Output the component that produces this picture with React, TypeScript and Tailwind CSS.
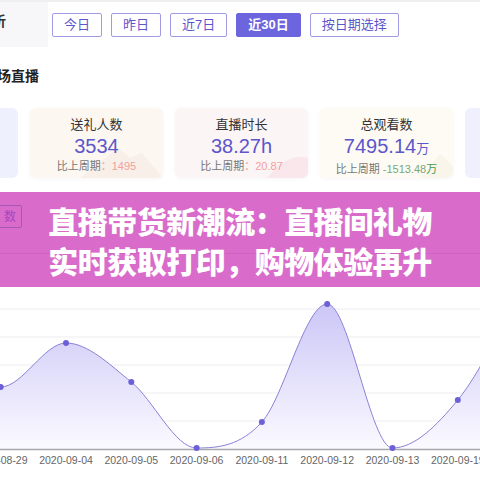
import React from 'react';

const font = { fontFamily: '"Liberation Sans", "Noto Sans CJK SC", sans-serif' };

const ranges = ['今日', '昨日', '近7日', '近30日', '按日期选择'];

const cards = [
  { title: '送礼人数', value: '3534', unit: '', diff: '1495', tone: 'up', bg: 'bg-[#fcf7f1]' },
  { title: '直播时长', value: '38.27h', unit: '', diff: '20.87', tone: 'up', bg: 'bg-[#fcf5f5]' },
  { title: '总观看数', value: '7495.14', unit: '万', diff: '-1513.48', tone: 'down', bg: 'bg-[#fdfbf4]' },
];

// chart points (x in px, y inside the svg)
const labels = ['2020-08-29', '2020-09-04', '2020-09-05', '2020-09-06', '2020-09-11', '2020-09-12', '2020-09-13', '2020-09-19'];
const values = [85, 100, 56, 95, 161, 135, 17, 161, 113, 2];
const step = 65.3;
const pts = values.map((y, i) => ({ x: 0.7 + step * (i - 1), y }));
const baseY = 162;

function monotonePath(p: { x: number; y: number }[]) {
  const n = p.length;
  const m: number[] = [];
  for (let i = 0; i < n - 1; i++) m.push((p[i + 1].y - p[i].y) / (p[i + 1].x - p[i].x));
  const t: number[] = [];
  for (let i = 0; i < n; i++) {
    if (i === 0) t.push(m[0]);
    else if (i === n - 1) t.push(m[n - 2]);
    else if (m[i - 1] * m[i] <= 0) t.push(0);
    else {
      const avg = (m[i - 1] + m[i]) / 2;
      const lim = 3 * Math.min(Math.abs(m[i - 1]), Math.abs(m[i]));
      t.push(Math.sign(avg) * Math.min(Math.abs(avg), lim));
    }
  }
  let d = `M${p[0].x},${p[0].y}`;
  for (let i = 0; i < n - 1; i++) {
    const h = p[i + 1].x - p[i].x;
    d += ` C${p[i].x + h / 3},${p[i].y + (t[i] * h) / 3} ${p[i + 1].x - h / 3},${p[i + 1].y - (t[i + 1] * h) / 3} ${p[i + 1].x},${p[i + 1].y}`;
  }
  return d;
}

function StatCard({ card }: { card: (typeof cards)[number] }) {
  return (
    <div className={`relative w-[133px] h-[70px] shrink-0 rounded-md overflow-hidden ${card.bg} shadow-[0_1px_4px_rgba(0,0,0,0.04)]`}>
      {/* faint decoration */}
      <svg className="absolute left-0 bottom-0" width="133" height="40" viewBox="0 0 133 40">
        {card.title === '送礼人数' && <path d="M50 40 L88 10 L100 20 L112 15 L133 40 Z" fill="#f8efe8" />}
        {card.title === '直播时长' && <path d="M92 40 Q112 14 133 20 L133 40 Z" fill="#f9e7ec" />}
        {card.title === '总观看数' && <path d="M100 40 L120 16 L133 28 L133 40 Z" fill="#f9f5ea" />}
      </svg>
      <div className="relative flex flex-col items-center pt-[8px]">
        <div className="text-[13px] leading-[18px] text-[#333]">{card.title}</div>
        <div className="text-[20px] leading-[24px] text-[#5d56cb]">
          {card.value}
          {card.unit && <span className="text-[13px]">{card.unit}</span>}
        </div>
        <div className="text-[11px] leading-[16px] text-[#777]">
          比上周期
          {card.tone === 'up' ? (
            <span className="text-[#f2a0a0]">：{card.diff}</span>
          ) : (
            <span className="text-[#7aa87a]">
              {' '}
              {card.diff}
              <span className="text-[#4c9a4c]">万</span>
            </span>
          )}
        </div>
      </div>
    </div>
  );
}

export default function App() {
  const line = monotonePath(pts);
  const area = `${line} L${pts[pts.length - 1].x},${baseY} L${pts[0].x},${baseY} Z`;

  return (
    <div className="w-[480px] h-[480px] overflow-hidden bg-white" style={font}>
      <div className="h-[2px] bg-[#efeff2]" />

      {/* header */}
      <div className="flex h-[45px]">
        <div className="w-[48px] h-full bg-[#f7f7f9] flex items-start overflow-hidden pt-[9px]">
          <span className="-ml-[8px] text-[14px] font-bold text-[#333]">析</span>
        </div>
        <div className="flex gap-[9px] pl-[4px] pt-[11px]">
          {ranges.map((r) =>
            r === '近30日' ? (
              <button key={r} className="h-[24px] px-[11px] rounded-[2px] border border-[#6c65dd] bg-[#6c65dd] text-white text-[13px] font-bold">
                {r}
              </button>
            ) : (
              <button key={r} className="h-[24px] px-[11px] rounded-[2px] border border-[#a19be6] bg-white text-[#5d56cb] text-[13px]">
                {r}
              </button>
            )
          )}
        </div>
      </div>

      {/* section title */}
      <div className="mt-[19px] h-[20px] leading-[20px] overflow-hidden">
        <span className="-ml-[3px] inline-block text-[14px] font-bold text-[#222]">场直播</span>
      </div>

      {/* stat cards */}
      <div className="mt-[22px] flex gap-3 -ml-[115px]">
        <div className="w-[133px] h-[70px] shrink-0 rounded-md bg-[#eef0fd]" />
        {cards.map((c) => (
          <StatCard key={c.title} card={c} />
        ))}
        <div className="w-[133px] h-[70px] shrink-0 rounded-md bg-[#eef0fd]" />
      </div>

      {/* promo band */}
      <div className="relative mt-[14px] h-[95px] bg-[#d96ccb] flex flex-col items-center justify-center">
        <div className="absolute left-[-30px] top-[13px] h-[23px] w-[52px] rounded-[2px] border border-[#a856b6] flex items-center justify-end pr-[5px] text-[12px] text-[#a745bd]">
          数
        </div>
        <div className="absolute left-0 right-0 top-[61px] h-px bg-[#cf63c2]" />
        <div
          className="relative text-white text-[30px] leading-[40px] font-black tracking-[-0.5px]"
          style={{ fontFamily: '"Noto Sans CJK SC", sans-serif' }}
        >
          直播带货新潮流：直播间礼物
        </div>
        <div
          className="relative text-white text-[30px] leading-[40px] font-black tracking-[-0.5px]"
          style={{ fontFamily: '"Noto Sans CJK SC", sans-serif' }}
        >
          实时获取打印，购物体验再升
        </div>
      </div>

      {/* chart */}
      <svg width="480" height="193" viewBox="0 0 480 193" className="block">
        <defs>
          <linearGradient id="fill" x1="0" y1="0" x2="0" y2={baseY} gradientUnits="userSpaceOnUse">
            <stop offset="0" stopColor="#c6c0f5" />
            <stop offset="1" stopColor="#fbfaff" />
          </linearGradient>
        </defs>
        {[22, 50, 78, 106, 134].map((y) => (
          <line key={y} x1="0" x2="480" y1={y} y2={y} stroke="#ededf0" strokeWidth="1" />
        ))}
        <path d={area} fill="url(#fill)" />
        <path d={line} fill="none" stroke="#8a82d6" strokeWidth="1" />
        <line x1="0" x2="480" y1={baseY + 0.5} y2={baseY + 0.5} stroke="#a8a8ae" strokeWidth="1.5" />
        {pts.slice(1, 9).map((p, i) => (
          <circle key={i} cx={p.x} cy={p.y} r="3" fill="#6b60d8" />
        ))}
        {labels.map((l, i) => (
          <text
            key={l}
            x={pts[i + 1].x}
            y="177"
            textAnchor="middle"
            fontSize="10.5"
            fill="#666"
            fontFamily='"Liberation Sans", sans-serif'
          >
            {l}
          </text>
        ))}
      </svg>
    </div>
  );
}
